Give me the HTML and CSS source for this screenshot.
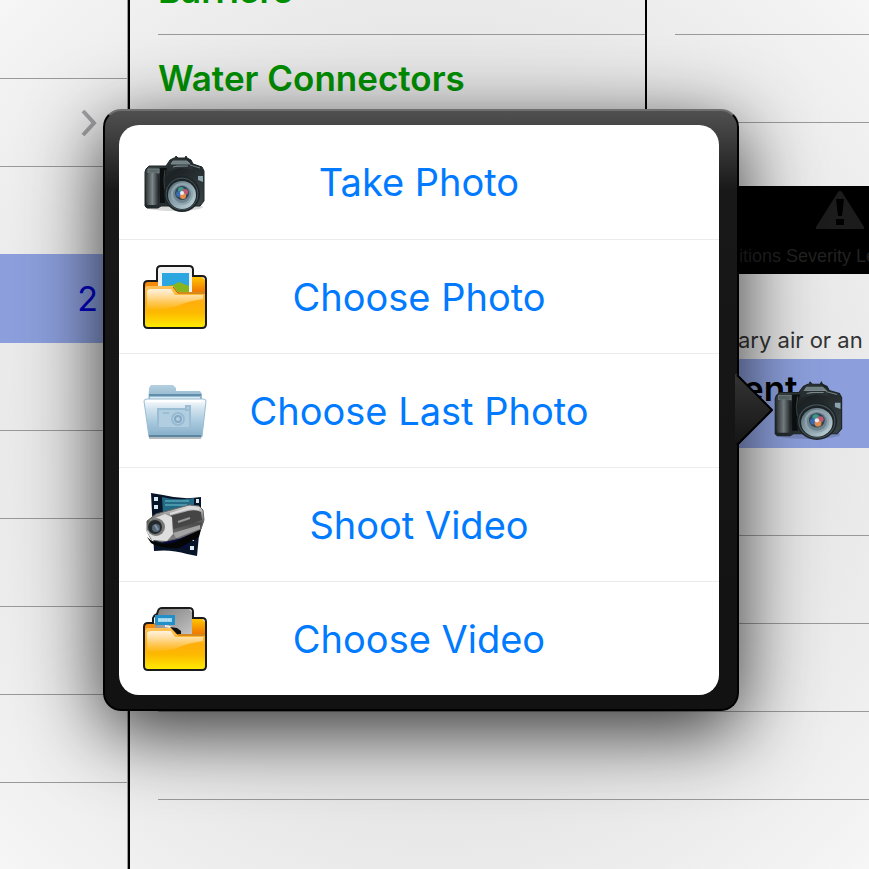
FILE: index.html
```
<!DOCTYPE html>
<html lang="en">
<head>
    <meta charset="UTF-8">
    <meta name="viewport" content="width=device-width, initial-scale=1.0">
    <title>Inspection</title>
    <link rel="stylesheet" href="styles.css">
</head>
<body>

    <!-- shared gradients and the camera, used twice -->
    <svg class="defs" width="0" height="0" aria-hidden="true">
        <defs>
            <linearGradient id="gold" x1="0" y1="0" x2="0" y2="1">
                <stop offset="0" stop-color="#ffc25a"/>
                <stop offset=".4" stop-color="#ffae0c"/>
                <stop offset=".65" stop-color="#fdb900"/>
                <stop offset="1" stop-color="#ffea00"/>
            </linearGradient>
            <linearGradient id="goldBack" x1="0" y1="0" x2="0" y2="1">
                <stop offset="0" stop-color="#ffc400"/>
                <stop offset=".6" stop-color="#f07d00"/>
            </linearGradient>
            <linearGradient id="shine" x1="0" y1="0" x2="0" y2="1">
                <stop offset="0" stop-color="#fff" stop-opacity=".8"/>
                <stop offset="1" stop-color="#fff" stop-opacity=".05"/>
            </linearGradient>
            <linearGradient id="black" x1="0" y1="0" x2="1" y2="1">
                <stop offset="0" stop-color="#4c5759"/>
                <stop offset=".4" stop-color="#1d2224"/>
                <stop offset="1" stop-color="#3a4548"/>
            </linearGradient>
            <linearGradient id="grip" x1="0" y1="0" x2="1" y2="0">
                <stop offset="0" stop-color="#33393b"/>
                <stop offset=".5" stop-color="#7c8689"/>
                <stop offset="1" stop-color="#1b2022"/>
            </linearGradient>
            <linearGradient id="glass" x1="0" y1="0" x2="1" y2="1">
                <stop offset="0" stop-color="#53666e"/>
                <stop offset=".5" stop-color="#8fa5ae"/>
                <stop offset="1" stop-color="#c5d8df"/>
            </linearGradient>
            <linearGradient id="blueFront" x1="0" y1="0" x2="0" y2="1">
                <stop offset="0" stop-color="#ffffff"/>
                <stop offset=".25" stop-color="#d3e4ef"/>
                <stop offset=".6" stop-color="#a9c9de"/>
                <stop offset="1" stop-color="#83adc8"/>
            </linearGradient>
            <linearGradient id="blueBack" x1="0" y1="0" x2="0" y2="1">
                <stop offset="0" stop-color="#b5d0e0"/>
                <stop offset="1" stop-color="#7ba7c1"/>
            </linearGradient>
            <linearGradient id="steel" x1="0" y1="0" x2="0" y2="1">
                <stop offset="0" stop-color="#e4e4e4"/>
                <stop offset=".3" stop-color="#8b8b8b"/>
                <stop offset=".5" stop-color="#4a4a4a"/>
                <stop offset="1" stop-color="#8d8d8d"/>
            </linearGradient>
            <linearGradient id="tape" x1="0" y1="0" x2="1" y2="1">
                <stop offset="0" stop-color="#7d7d7d"/>
                <stop offset="1" stop-color="#c6c6c6"/>
            </linearGradient>
            <symbol id="camera" viewBox="0 -2 64 64" preserveAspectRatio="none">
                <ellipse cx="31" cy="55" rx="29" ry="4" fill="#000" opacity=".15"/>
                <path d="M3 17l3-3h17l4-6 4-2h1l1-2 2 2h7l1-2 1 2 4 2 2 4 9 3 2 4v30l-4 5H18l-3 2H4l-2-2V20z" fill="url(#black)" stroke="#1c2426"/>
                <path d="M27 9l5-2h11l5 3 2 8-12-2-13 3z" fill="#293134"/>
                <path d="M30 9h14l3 3H28zM30 15l4-1h11" fill="#718083" stroke="#7c898c"/>
                <path d="M5 17h11v4H5zM47 13l10 3" fill="#5d6769" stroke="#718083"/>
                <path d="M3 24q4-4 11-3l2 3-1 29H4l-1-3z" fill="url(#grip)"/>
                <path d="M17 16h7l-2 8v27h-5z" fill="#0c0f10"/>
                <path d="M22 18q-3 16 3 30" fill="none" stroke="#3d484b"/>
                <path d="M55 24h5v6l-5-2z" fill="#8aa3ad"/>
                <circle cx="39" cy="42" r="18" fill="#1c2427"/>
                <circle cx="39" cy="42" r="16" fill="none" stroke="#455257"/>
                <circle cx="39" cy="43" r="14" fill="url(#glass)"/>
                <circle cx="39" cy="42" r="10" fill="#6e858f" stroke="#90a5af" stroke-width="2"/>
                <circle cx="39" cy="41" r="7" fill="#33465b"/>
                <circle cx="38" cy="38" r="3" fill="#3d9b89"/>
                <circle cx="42" cy="40" r="3" fill="#be5972"/>
                <circle cx="36" cy="42" r="3" fill="#386cad"/>
                <circle cx="40" cy="44" r="3" fill="#e58d4a"/>
                <circle cx="39" cy="41" r="2" fill="#e9eef5"/>
            </symbol>
            <symbol id="folder" viewBox="0 0 64 64">
                <path d="M2 24q0-3 3-3h25l5 6h27v33l-2 2H4l-2-2z" fill="url(#gold)"/>
                <path d="M4 27q0-3 4-3h20l4 6h28v4q-15 2-26 7-14 4-30 3z" fill="url(#shine)"/>
                <path d="M30 22l5 6h27" fill="none" stroke="#a85b00"/>
            </symbol>
        </defs>
    </svg>

    <div class="board">
        <aside class="sidebar">
            <div class="row first"></div>
            <div class="row">
                <svg class="chevron" viewBox="0 0 18 28" aria-hidden="true"><path d="M3 2l11 12L3 26" fill="none" stroke="#a3a3a6" stroke-width="4"/></svg>
            </div>
            <div class="row plain"></div>
            <div class="row selected">2</div>
            <div class="row"></div>
            <div class="row"></div>
            <div class="row"></div>
            <div class="row"></div>
            <div class="row"></div>
            <div class="rest"></div>
        </aside>

        <main class="content">
            <div class="panels">
                <section class="categories">
                    <div class="item cut"><span>Barriers</span></div>
                    <div class="item last"><span>Water Connectors</span></div>
                </section>
                <section class="details">
                    <div class="item cut"></div>
                    <div class="item"></div>
                    <div class="spacer"></div>
                    <div class="severity">
                        <svg class="warning" viewBox="0 0 48 38" aria-hidden="true">
                            <path d="M22 1q2-2 4 0l22 35v2H0v-2z" fill="#1c1c1c"/>
                            <path d="M20 8h8l-2 17h-4zM20 28h8v6h-8z" fill="#000"/>
                        </svg>
                        <span class="severity-text">itions Severity Le</span>
                    </div>
                    <div class="note">ary air or an</div>
                    <div class="equipment">
                        <span>ent</span>
                        <svg class="attach" aria-hidden="true"><use href="#camera"/></svg>
                    </div>
                    <div class="item"></div>
                    <div class="item"></div>
                </section>
            </div>
            <div class="item wide"></div>
            <div class="item wide"></div>
        </main>

        <div class="popover">
            <svg class="arrow" viewBox="0 0 38 72" aria-hidden="true">
                <defs>
                    <linearGradient id="arrowFill" x1="0" y1="0" x2="0" y2="1">
                        <stop offset="0" stop-color="#343434"/>
                        <stop offset="1" stop-color="#141414"/>
                    </linearGradient>
                </defs>
                <path d="M0 0h2l35 36L2 72H0z" fill="url(#arrowFill)"/>
                <path d="M2 1l35 35L2 71" fill="none" stroke="#000" stroke-width="2"/>
            </svg>
            <div class="menu">
                <button type="button">
                    <svg class="icon" aria-hidden="true"><use href="#camera"/></svg>
                    Take Photo
                </button>
                <button type="button">
                    <svg class="icon" viewBox="0 0 64 64" aria-hidden="true">
                        <path d="M48 12h11l3 3v20H46z" fill="url(#goldBack)"/>
                        <path d="M2 18l3-2h10v14H2z" fill="#f58b0b"/>
                        <path d="M15 5l3-3h28l3 3v24H15z" fill="#f2f2f2"/>
                        <path d="M19 8h27v18H19z" fill="#2ba6e1"/>
                        <path d="M19 24q5-4 11-4l6-3 10 4v8H33z" fill="#88b51f"/>
                        <use href="#folder"/>
                        <path d="M14 17V5q0-4 4-4h28q4 0 4 4v6h9q4 0 4 4v44q0 4-4 4H5q-4 0-4-4V20q0-4 4-4h9" fill="none" stroke="#1a1a1a" stroke-width="2"/>
                    </svg>
                    Choose Photo
                </button>
                <button type="button">
                    <svg class="icon" viewBox="0 0 64 64" aria-hidden="true">
                        <path d="M6 58h52v2H6z" fill="#777" opacity=".5"/>
                        <path d="M6 9l2-3h22l3 3v3h24l2 3v12H5z" fill="url(#blueBack)"/>
                        <path d="M6 16h52" stroke="#628ead" stroke-width="2"/>
                        <path d="M7 19h50" stroke="#dae9f2" stroke-width="2"/>
                        <path d="M1 22q0-2 3-2h56q3 0 3 2l-4 36H6z" fill="url(#blueFront)" stroke="#9bbdd3"/>
                        <path d="M4 22h56" stroke="#fff" stroke-width="2"/>
                        <path d="M15 30h28v-3h4v22H15z" fill="#b0cee0" stroke="#9abdd4" stroke-width="2"/>
                        <path d="M20 34h6M42 31h4" stroke="#9abdd4" stroke-width="2"/>
                        <circle cx="35" cy="40" r="6" fill="#b5d0e1" stroke="#97bad2" stroke-width="2"/>
                        <circle cx="35" cy="40" r="3" fill="none" stroke="#84a9c5" stroke-width="2"/>
                        <path d="M6 57h52" stroke="#5d859e" stroke-width="2"/>
                    </svg>
                    Choose Last Photo
                </button>
                <button type="button">
                    <svg class="icon" viewBox="0 0 64 64" aria-hidden="true">
                        <path d="M8 0l12 2q20 5 38 2v17l-4 42-10-2q-16-5-33-3z" fill="#071326"/>
                        <path d="M19 4q15 4 32 1v16H20z" fill="#236984"/>
                        <path d="M22 8h24M22 12h22" stroke="#4995aa" stroke-width="2"/>
                        <path d="M19 50l26 6V41l-26-1z" fill="#080c3a"/>
                        <path d="M11 4h4v4h-4zM11 12h4v4h-4zM53 6h3v4h-3zM53 14h3v4h-3zM47 44h4v4h-4zM47 53h4v4h-4z" fill="#dce8f0"/>
                        <path d="M4 44q10 10 28 5l19-9 8-7-3 11-20 11q-20 1-28-5z" fill="#050505"/>
                        <path d="M4 28l9-7 15-4 18-5 10 1 4 4 1 10-3 9-21 9-18 4-11-3-4-8z" fill="url(#steel)" stroke="#666"/>
                        <path d="M27 23l18-5q8-2 13 1l1 8-28 9z" fill="#454545"/>
                        <path d="M27 21l20-6 9 1" fill="none" stroke="#ddd" stroke-width="2"/>
                        <path d="M35 29l12-4" stroke="#999" stroke-width="2"/>
                        <path d="M30 40l27-8v4l-24 9z" fill="#a3a3a3"/>
                        <path d="M7 27l15-6 7 3 1 17-6 7-15-1-5-8z" fill="#dedede"/>
                        <circle cx="13" cy="34" r="9" fill="#777"/>
                        <circle cx="12" cy="34" r="7" fill="#242a2c"/>
                        <circle cx="13" cy="35" r="4" fill="#526676"/>
                        <path d="M12 32l3 5" stroke="#8b91a9" stroke-width="2"/>
                    </svg>
                    Shoot Video
                </button>
                <button type="button">
                    <svg class="icon" viewBox="0 0 64 64" aria-hidden="true">
                        <path d="M48 12h11l3 3v20H46z" fill="url(#goldBack)"/>
                        <path d="M2 18l3-2h10v14H2z" fill="#f58b0b"/>
                        <path d="M12 8l6-6h28l3 3v24H12z" fill="url(#tape)"/>
                        <path d="M22 19q7 0 12 8" fill="none" stroke="#ececec" stroke-width="2"/>
                        <use href="#folder"/>
                        <path d="M27 20l7 1 4 3v3h-4l-5-5z" fill="#111"/>
                        <path d="M10 17v-6q1-3 4-4l1-3q1-3 4-3h27q4 0 4 4v6h9q4 0 4 4v44q0 4-4 4H5q-4 0-4-4V20q0-4 4-4h5" fill="none" stroke="#1a1a1a" stroke-width="2"/>
                        <path d="M12 8h20v10H12z" fill="#238fc8"/>
                        <path d="M15 11h14v4H15z" fill="#9bd3ed"/>
                        <path d="M16 13h12" stroke="#d5eff8" stroke-dasharray="2 1"/>
                    </svg>
                    Choose Video
                </button>
            </div>
        </div>
    </div>

</body>
</html>
```
FILE: styles.css
```
body {
    margin: 0;
    font-family: Inter, "Liberation Sans", sans-serif;
    background-color: #e8e8e8;
}

.defs {
    position: absolute;
}

.board {
    position: relative;
    display: flex;
    min-height: 100vh;
    overflow: hidden;
    background: radial-gradient(circle at center, #e6e6e6 60%, #f6f6f6 100%);
}

.sidebar {
    box-sizing: border-box;
    display: flex;
    flex-direction: column;
    width: 130px;
    flex-shrink: 0;
    border-right: 2px solid #000;
}

.row {
    box-sizing: border-box;
    height: 88px;
    display: flex;
    align-items: center;
    justify-content: flex-end;
    padding-right: 29px;
    border-bottom: 1px solid #999;
    border-right: 1px solid #999;
}

.row.first {
    height: 79px;
}

.row.plain {
    height: 87px;
    border-bottom: none;
}

.row.selected {
    height: 89px;
    border-bottom: none;
    background-color: #8c9fdc;
    color: #0000c8;
    font-size: 34px;
}

.rest {
    flex: 1;
    border-right: 1px solid #999;
}

.chevron {
    width: 18px;
    height: 28px;
}

.content {
    flex: 1;
    min-width: 0;
}

.panels {
    display: flex;
}

.categories {
    flex: 1;
    border-right: 2px solid #000;
    padding-left: 28px;
}

.details {
    width: 222px;
    flex-shrink: 0;
}

.item {
    box-sizing: border-box;
    height: 88px;
    display: flex;
    align-items: center;
    border-bottom: 1px solid #999;
    color: #008f00;
    font-size: 35px;
    font-weight: 600;
    line-height: 86px;
    white-space: nowrap;
}

.item.cut {
    height: 35px;
    align-items: flex-end;
    overflow: hidden;
    line-height: 88px;
}

.item.last {
    height: 86px;
    border-bottom: none;
}

.item.wide,
.details .item {
    margin-left: 28px;
}

.spacer {
    height: 63px;
}

.severity {
    box-sizing: border-box;
    height: 88px;
    padding: 5px 0 0 92px;
    background-color: #000;
    color: #222;
    font-family: "Liberation Sans", Arial, sans-serif;
    font-size: 18px;
    white-space: nowrap;
}

.warning {
    display: block;
    width: 48px;
    height: 38px;
    margin-left: 77px;
}

.severity-text {
    display: block;
    line-height: 54px;
}

.note {
    height: 85px;
    padding-left: 91px;
    box-sizing: border-box;
    padding-top: 50px;
    line-height: 32px;
    color: #333;
    font-size: 22px;
    white-space: nowrap;
}

.equipment {
    position: relative;
    box-sizing: border-box;
    height: 89px;
    padding: 7px 0 0 96px;
    background-color: #8c9fdc;
    color: #000;
    font-size: 35px;
    font-weight: 600;
    line-height: 44px;
}

.attach {
    position: absolute;
    top: 17px;
    right: 24px;
    width: 72px;
    height: 66px;
}

.popover {
    position: absolute;
    top: 109px;
    left: 103px;
    right: 130px;
    box-sizing: border-box;
    padding: 14px 18px 14px 14px;
    border: 2px solid #000;
    border-top-color: #6f6f6f;
    border-radius: 18px;
    background: linear-gradient(#505050, #181818 80px, #121212);
    box-shadow: 0 20px 76px rgba(0, 0, 0, 0.78);
}

.arrow {
    position: absolute;
    top: 263px;
    right: -36px;
    width: 38px;
    height: 72px;
}

.menu {
    overflow: hidden;
    border-radius: 20px;
    background-color: #fff;
}

.menu button {
    position: relative;
    display: block;
    box-sizing: border-box;
    width: 100%;
    height: 114px;
    padding: 0 24px;
    border: none;
    background: none;
    color: #007aff;
    font-family: inherit;
    font-size: 38px;
    text-align: center;
}

.menu button + button {
    border-top: 1px solid #ececec;
}

.icon {
    position: absolute;
    top: 25px;
    left: 24px;
    width: 64px;
    height: 64px;
}
```
